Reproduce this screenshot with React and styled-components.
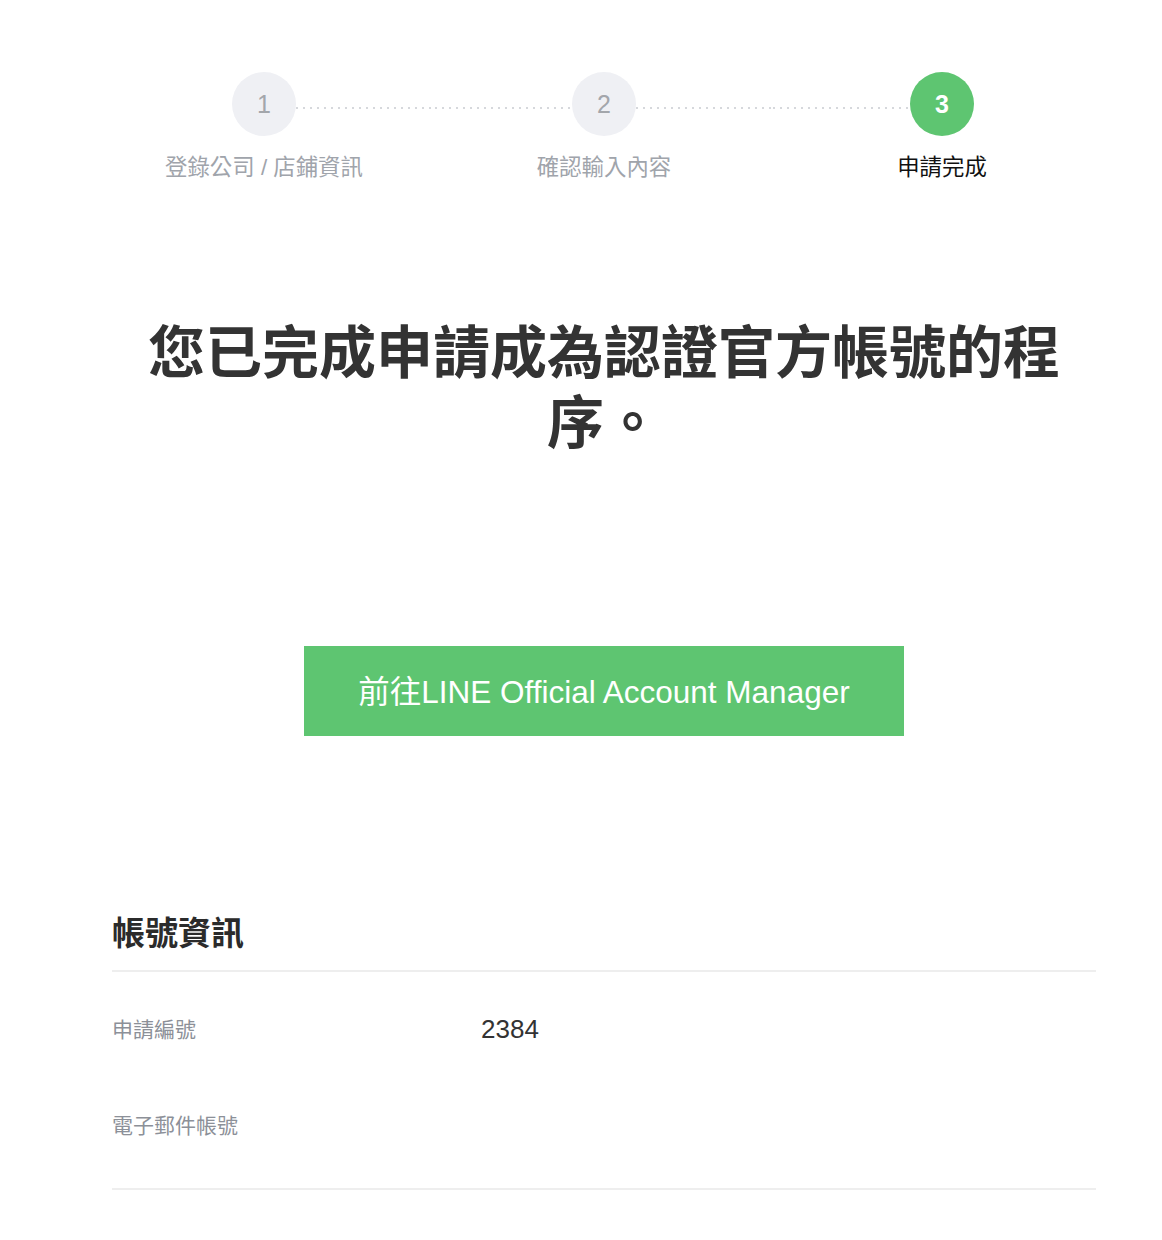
import React from "react";
import styled, { createGlobalStyle } from "styled-components";

const GlobalStyle = createGlobalStyle`
    html, body {
        margin: 0;
        padding: 0;
        background: #ffffff;
    }
    body {
        font-family: "Liberation Sans", "Noto Sans CJK TC", sans-serif;
        color: #333333;
    }
`

const steps = [
    { number: 1, title: "登錄公司 / 店鋪資訊" },
    { number: 2, title: "確認輸入內容" },
    { number: 3, title: "申請完成" },
]

const currentStep = 3

const accountInfo = [
    { label: "申請編號", value: "2384" },
    { label: "電子郵件帳號", value: "" },
]

const App = () => {
    return (
        <PageWrapper lang="zh-Hant">
            <GlobalStyle />
            <Content>
                <Stepper>
                    {steps.map((step, index) => {
                        return (
                            <Step key={index}>
                                {index > 0 && <Connector side="left" />}
                                {index < steps.length - 1 && <Connector side="right" />}
                                <StepCircle active={step.number === currentStep}>
                                    {step.number}
                                </StepCircle>
                                <StepLabel active={step.number === currentStep}>
                                    {step.title}
                                </StepLabel>
                            </Step>
                        )
                    })}
                </Stepper>

                <Title>您已完成申請成為認證官方帳號的程序。</Title>

                <ButtonRow>
                    <PrimaryButton type="button">前往LINE Official Account Manager</PrimaryButton>
                </ButtonRow>

                <InfoSection>
                    <SectionHeader>帳號資訊</SectionHeader>
                    <InfoList>
                        {accountInfo.map((item, index) => {
                            return (
                                <InfoRow key={index}>
                                    <InfoLabel>{item.label}</InfoLabel>
                                    <InfoValue>{item.value}</InfoValue>
                                </InfoRow>
                            )
                        })}
                    </InfoList>
                </InfoSection>
            </Content>
        </PageWrapper>
    )
}

const PageWrapper = styled.div`
    width: 100%;
    min-height: 1240px;
    padding: 72px 66px 40px 112px;
    box-sizing: border-box;
`

const Content = styled.div`
    width: 984px;
    display: flex;
    flex-direction: column;
`

const Stepper = styled.div`
    display: grid;
    grid-template-columns: 340px 340px 336px;
    margin: 0 -14px 0 -18px;
`

const Step = styled.div`
    position: relative;
    display: flex;
    flex-direction: column;
    align-items: center;
    gap: 17px;
`

const Connector = styled.div`
    position: absolute;
    top: 35px;
    height: 2px;
    width: 137px;
    ${(props) => (props.side === "left" ? "right: 50%; margin-right: 32px;" : "left: 50%; margin-left: 32px;")}
    background-image: repeating-linear-gradient(
        to right,
        #d6d8dc 0px,
        #d6d8dc 2px,
        transparent 2px,
        transparent 7px
    );
`

const StepCircle = styled.div`
    width: 64px;
    height: 64px;
    border-radius: 50%;
    display: flex;
    justify-content: center;
    align-items: center;
    font-size: 25px;
    font-weight: ${(props) => (props.active ? 700 : 400)};
    background-color: ${(props) => (props.active ? "#5ec571" : "#eff0f4")};
    color: ${(props) => (props.active ? "#ffffff" : "#a3a6ab")};
`

const StepLabel = styled.p`
    margin: 0;
    font-size: 22.4px;
    line-height: 30px;
    white-space: pre;
    color: ${(props) => (props.active ? "#111111" : "#a0a4ab")};
`

const Title = styled.h1`
    margin: 135px 0 0;
    font-size: 57px;
    line-height: 70px;
    font-weight: 700;
    text-align: center;
    color: #333333;
    line-break: strict;
`

const ButtonRow = styled.div`
    display: flex;
    justify-content: center;
    margin-top: 188px;
`

const PrimaryButton = styled.button`
    width: 600px;
    height: 90px;
    padding: 0 0 4px;
    border: none;
    border-radius: 0;
    background-color: #5ec571;
    color: #ffffff;
    font-family: inherit;
    font-size: 31.5px;
    cursor: pointer;
`

const InfoSection = styled.div`
    margin-top: 176px;
    display: flex;
    flex-direction: column;
`

const SectionHeader = styled.h2`
    margin: 0;
    padding-bottom: 14px;
    font-size: 33px;
    line-height: 44px;
    font-weight: 700;
    color: #2b2b2b;
    border-bottom: 2px solid #eeeeee;
`

const InfoList = styled.div`
    display: flex;
    flex-direction: column;
    gap: 69px;
    padding: 38px 0 49px;
    border-bottom: 2px solid #eeeeee;
`

const InfoRow = styled.div`
    display: grid;
    grid-template-columns: 369px 1fr;
    align-items: center;
    height: 30px;
`

const InfoLabel = styled.div`
    font-size: 21px;
    color: #8c9098;
`

const InfoValue = styled.div`
    font-size: 26px;
    color: #333333;
    padding-top: 4px;
`

export default App
